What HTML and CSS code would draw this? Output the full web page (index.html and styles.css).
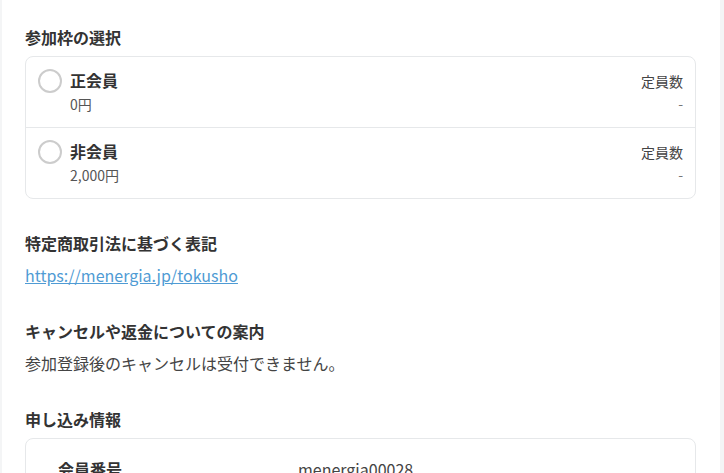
FILE: index.html
```html
<!DOCTYPE html>
<html lang="ja">

<head>
    <meta charset="UTF-8" />
    <meta name="viewport" content="width=device-width, initial-scale=1.0" />
    <title>参加申し込み</title>
    <link rel="stylesheet" href="styles.css">
</head>

<body>
    <div class="page">
        <section class="section">
            <h2>参加枠の選択</h2>
            <div class="card">
                <label class="plan">
                    <span class="radio"></span>
                    <span class="plan-info">
                        <span class="plan-name">正会員</span>
                        <span class="plan-price">0円</span>
                    </span>
                    <span class="plan-cap">
                        <span>定員数</span>
                        <span class="cap-value">-</span>
                    </span>
                </label>
                <label class="plan">
                    <span class="radio"></span>
                    <span class="plan-info">
                        <span class="plan-name">非会員</span>
                        <span class="plan-price">2,000円</span>
                    </span>
                    <span class="plan-cap">
                        <span>定員数</span>
                        <span class="cap-value">-</span>
                    </span>
                </label>
            </div>
        </section>

        <section class="section">
            <h2>特定商取引法に基づく表記</h2>
            <a class="link" href="#">https://menergia.jp/tokusho</a>
        </section>

        <section class="section">
            <h2>キャンセルや返金についての案内</h2>
            <p class="text">参加登録後のキャンセルは受付できません。</p>
        </section>

        <section class="section">
            <h2>申し込み情報</h2>
            <div class="card info">
                <div class="info-row">
                    <span class="info-label">会員番号</span>
                    <span class="info-value">menergia00028</span>
                </div>
            </div>
        </section>
    </div>
</body>

</html>
```

FILE: styles.css
```css
html,
body {
    margin: 0;
    height: 100%;
}

body {
    background-color: #f4f5f6;
    font-family: 'Noto Sans CJK JP', 'Noto Sans', sans-serif;
    color: #333;
    overflow: hidden;
}

.page {
    background-color: #ffffff;
    margin-left: 2px;
    width: 718px;
    min-height: 100%;
    padding: 25px 24px 0 23px;
    box-sizing: border-box;
}

.section {
    margin-bottom: 32px;
}

h2 {
    font-size: 16px;
    font-weight: 700;
    line-height: 24px;
    color: #333;
    margin: 0 0 7px;
}

.card {
    border: 1px solid #e6e8ea;
    border-radius: 8px;
    background-color: #fff;
}

.plan {
    display: flex;
    align-items: flex-start;
    padding: 11px 12px 12px 12px;
    cursor: pointer;
}

.plan + .plan {
    border-top: 1px solid #e6e8ea;
}

.radio {
    width: 20px;
    height: 20px;
    border: 2px solid #cccccc;
    border-radius: 50%;
    margin-top: 1px;
    margin-right: 8px;
    flex-shrink: 0;
}

.plan-info {
    display: flex;
    flex-direction: column;
    flex: 1;
}

.plan-name {
    font-size: 16px;
    font-weight: 700;
    line-height: 25px;
    color: #333;
}

.plan-price {
    font-size: 14px;
    line-height: 22px;
    color: #555;
}

.plan-cap {
    display: flex;
    flex-direction: column;
    align-items: flex-end;
    font-size: 14px;
    line-height: 22px;
    color: #444;
    padding-top: 2px;
}

.cap-value {
    color: #777;
}

.link {
    display: block;
    font-size: 16px;
    line-height: 24px;
    color: #4f9bd4;
    text-decoration: underline;
    margin-top: 8px;
}

.text {
    font-size: 16px;
    line-height: 24px;
    color: #444;
    margin: 8px 0 0;
}

.info {
    padding: 18px 32px;
}

.info-row {
    display: flex;
    font-size: 16px;
    line-height: 24px;
}

.info-label {
    width: 240px;
    font-weight: 700;
    color: #333;
}

.info-value {
    color: #444;
}
```
